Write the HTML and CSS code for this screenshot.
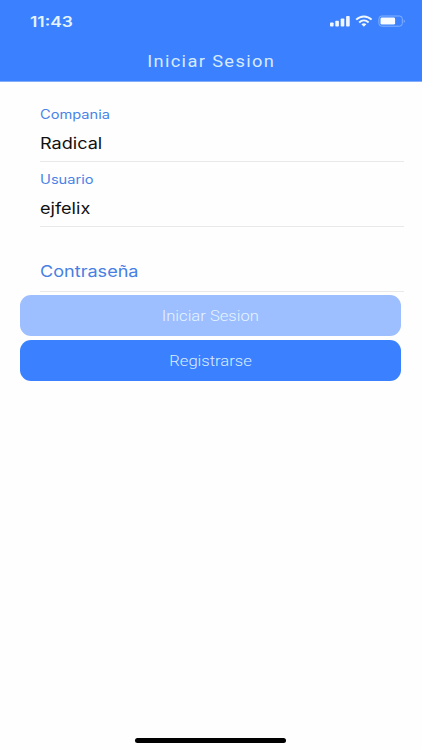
FILE: index.html
```html
<!DOCTYPE html>
<html lang="es">

<head>
    <meta charset="UTF-8">
    <meta name="viewport" content="width=device-width, initial-scale=1.0">
    <title>Iniciar Sesion</title>
    <link rel="stylesheet" href="styles.css">
</head>

<body>
    <header>
        <div class="statusBar">
            <span class="time">11:43</span>
            <svg class="statusIcons" width="76" height="14" viewBox="0 0 76 14">
                <!-- Signal -->
                <g fill="#f0f7ff">
                    <rect x="0" y="8.5" width="3.6" height="4" rx="0.8" />
                    <rect x="5.3" y="6.8" width="3.6" height="5.7" rx="0.8" />
                    <rect x="10.7" y="4.4" width="3.6" height="8.1" rx="0.8" />
                    <rect x="16.1" y="2" width="3.6" height="10.5" rx="0.8" />
                </g>
                <!-- Wifi -->
                <g fill="none" stroke="#f0f7ff" stroke-width="2">
                    <path d="M26.2 5.6C30.6 1.3 37.2 1.3 41.6 5.6" />
                    <path d="M29.2 8.4C32 5.8 35.8 5.8 38.6 8.4" />
                </g>
                <path d="M31.4 10.2C32.9 9 34.9 9 36.4 10.2L33.9 12.7Z" fill="#f0f7ff" />
                <!-- Battery -->
                <rect x="48.9" y="2" width="23.4" height="10.2" rx="2.8" fill="none" stroke="#84b2ff" />
                <rect x="50.5" y="3.6" width="14.6" height="7" rx="1.4" fill="#f8fcff" />
                <path d="M73.7 5.4C75.2 6 75.2 8.2 73.7 8.8Z" fill="#84b2ff" />
            </svg>
        </div>
        <h1><span>Iniciar Sesion</span></h1>
    </header>

    <main>
        <form>
            <div class="field">
                <label class="label">Compania</label>
                <span class="value">Radical</span>
            </div>
            <div class="field">
                <label class="label">Usuario</label>
                <span class="value">ejfelix</span>
            </div>
            <div class="field empty">
                <label class="placeholder">Contraseña</label>
            </div>
        </form>

        <div class="buttons">
            <button class="disabled"><span>Iniciar Sesion</span></button>
            <button><span>Registrarse</span></button>
        </div>
    </main>

    <div class="homeIndicator"></div>
</body>

</html>
```
FILE: styles.css
```css
* {
    box-sizing: border-box;
}

body {
    margin: 0;
    height: 750px;
    display: flex;
    flex-direction: column;
    background-color: #fefefe;
    font-family: Inter, "Liberation Sans", sans-serif;
    overflow: hidden;
}

header {
    height: 82px;
    background-color: #3a80ff;
    color: #e4f3ff;
    border-bottom: 1px solid #82adf8;
}

.statusBar {
    height: 42px;
    padding: 0 16px 0 30px;
    display: flex;
    justify-content: space-between;
    align-items: center;
}

.time {
    font-size: 14.5px;
    font-weight: 600;
    transform: scaleX(1.2);
    transform-origin: left;
}

h1 {
    margin: 0;
    height: 40px;
    line-height: 40px;
    text-align: center;
    font-family: Roboto, sans-serif;
    font-size: 16px;
    font-weight: 400;
    letter-spacing: 1.2px;
    color: #d8eaff;
}

h1 span {
    display: inline-block;
    transform: scaleX(1.14);
}

main {
    flex: 1;
}

form {
    margin: 15px 18px 0 40px;
}

.field {
    height: 65px;
    padding-top: 9px;
    display: flex;
    flex-direction: column;
    align-items: flex-start;
    border-bottom: 1px solid #e9e9e9;
}

.label,
.value,
.placeholder {
    transform: scaleX(1.13);
    transform-origin: left;
}

.label {
    font-size: 12.5px;
    line-height: 17px;
    color: #4a83e8;
    transform: scaleX(1.17);
}

.value {
    margin-top: 8px;
    font-size: 16px;
    line-height: 24px;
    color: #111;
}

.field.empty {
    padding-top: 32px;
}

.placeholder {
    font-size: 16px;
    line-height: 24px;
    color: #4680e4;
}

.buttons {
    margin: 3px 21px 0 20px;
    display: flex;
    flex-direction: column;
    gap: 4px;
}

button {
    height: 41px;
    padding: 0;
    border: none;
    border-radius: 11px;
    background-color: #3a80ff;
    color: #dceeff;
    font-family: Roboto, sans-serif;
    font-size: 15.5px;
    font-weight: 300;
}

button span {
    display: inline-block;
    transform: scaleX(1.07);
}

button.disabled {
    background-color: #9dbeff;
    color: #e6f4ff;
}

.homeIndicator {
    width: 151px;
    height: 5px;
    margin: 0 0 7px 135px;
    border-radius: 3px;
    background-color: #000;
}
```
